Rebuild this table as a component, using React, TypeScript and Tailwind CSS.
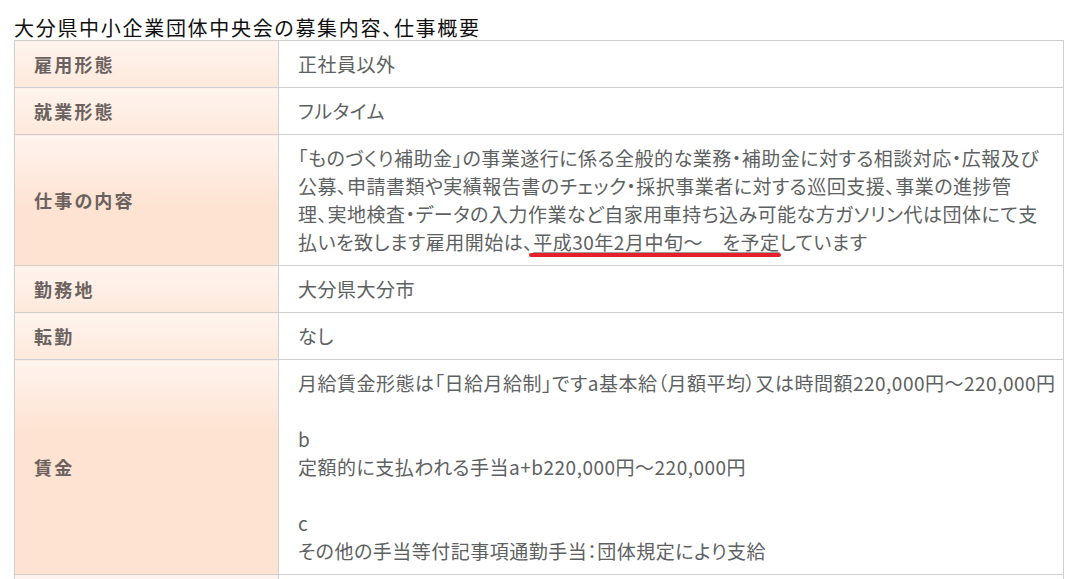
const jp = "font-['Noto_Sans_CJK_JP','Noto_Sans',sans-serif] [font-feature-settings:'palt']";

type Row = { label: string; lines: React.ReactNode[] };

const rows: Row[] = [
  { label: "雇用形態", lines: ["正社員以外"] },
  { label: "就業形態", lines: ["フルタイム"] },
  {
    label: "仕事の内容",
    lines: [
      "「ものづくり補助金」の事業遂行に係る全般的な業務・補助金に対する相談対応・広報及び",
      "公募、申請書類や実績報告書のチェック・採択事業者に対する巡回支援、事業の進捗管",
      "理、実地検査・データの入力作業など自家用車持ち込み可能な方ガソリン代は団体にて支",
      <>
        払いを致します雇用開始は、
        <span className="relative underline decoration-[#a0a0a0] underline-offset-2">
          平成30年2月中旬～　を予定
          <span className="absolute -left-[4px] -right-[2px] top-[25px] h-[4px] rounded-full bg-[#e3202c]" />
        </span>
        しています
      </>,
    ],
  },
  { label: "勤務地", lines: ["大分県大分市"] },
  { label: "転勤", lines: ["なし"] },
  {
    label: "賃金",
    lines: [
      "月給賃金形態は「日給月給制」ですa基本給（月額平均）又は時間額220,000円～220,000円",
      "",
      "b",
      "定額的に支払われる手当a+b220,000円～220,000円",
      "",
      "c",
      "その他の手当等付記事項通勤手当：団体規定により支給",
    ],
  },
  { label: "", lines: [""] },
];

export default function App() {
  return (
    <div className={`min-h-screen bg-white px-[14px] pt-[16px] ${jp}`}>
      <h2 className="text-[20px] leading-[24px] font-normal tracking-[1.7px] text-[#111]">
        大分県中小企業団体中央会の募集内容、仕事概要
      </h2>

      <table className="w-[1050px] table-fixed border-collapse border border-[#cfcfcf]">
        <colgroup>
          <col className="w-[264px]" />
          <col />
        </colgroup>
        <tbody>
          {rows.map((r, k) => (
            <tr key={k} className="border-b border-[#cfcfcf]">
              <th className="border-r border-[#cfcfcf] bg-[#fee3d2] bg-[linear-gradient(to_bottom,#fff4ee,#fee3d2_70px)] px-[19px] py-[9px] text-left align-middle text-[18px] leading-[28px] font-bold tracking-[2.2px] text-[#6b6260]">
                {r.label}
              </th>
              <td className="px-[19px] py-[9px] text-[19px] leading-[28px] tracking-[0.5px] text-[#5d6161]">
                {r.lines.map((l, i) => (
                  <div key={i} className="h-[28px] whitespace-nowrap">
                    {l}
                  </div>
                ))}
              </td>
            </tr>
          ))}
        </tbody>
      </table>
    </div>
  );
}
